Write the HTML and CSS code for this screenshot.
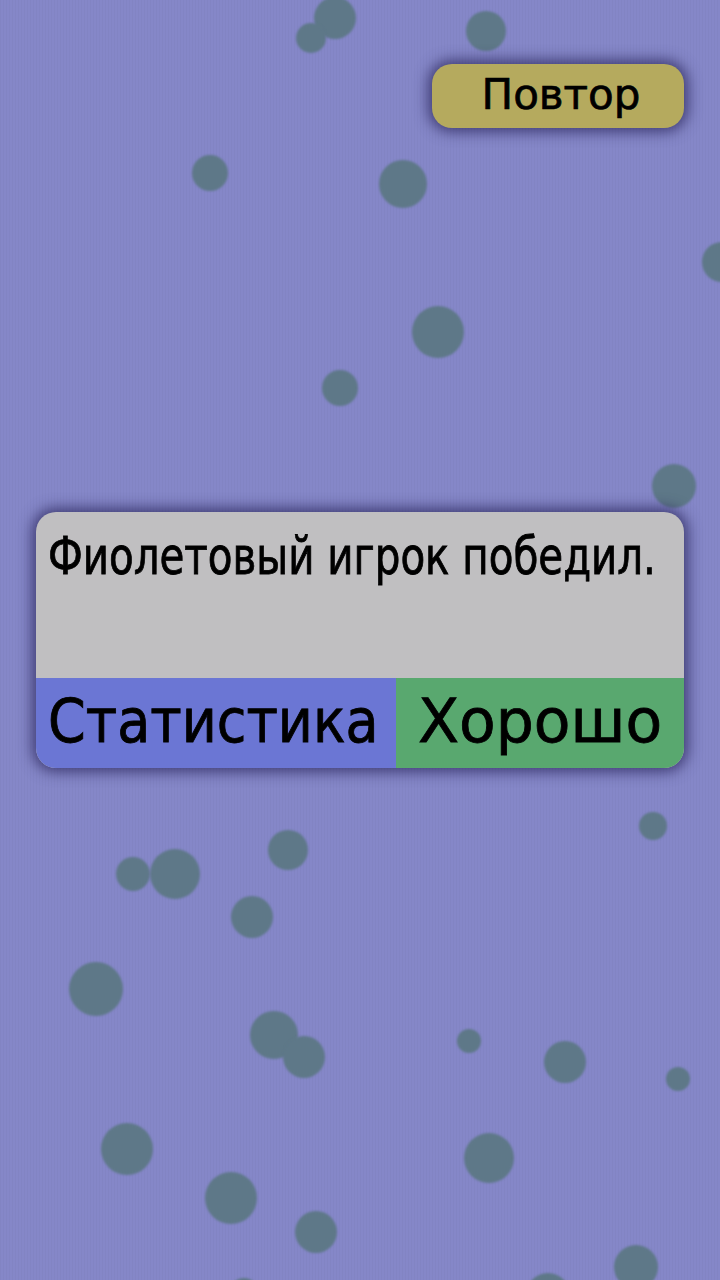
FILE: index.html
```html
<!DOCTYPE html>
<html lang="ru">
<head>
<meta charset="utf-8">
<title>Игра</title>
<link rel="stylesheet" href="styles.css">
</head>
<body>
<div class="screen">
  <div class="bubbles">
    <span class="dot" style="left:314px;top:-3px;width:42px;height:42px"></span>
    <span class="dot" style="left:296px;top:23px;width:30px;height:30px"></span>
    <span class="dot" style="left:466px;top:11px;width:40px;height:40px"></span>
    <span class="dot" style="left:192px;top:155px;width:36px;height:36px"></span>
    <span class="dot" style="left:379px;top:160px;width:48px;height:48px"></span>
    <span class="dot" style="left:702px;top:242px;width:40px;height:40px"></span>
    <span class="dot" style="left:412px;top:306px;width:52px;height:52px"></span>
    <span class="dot" style="left:322px;top:370px;width:36px;height:36px"></span>
    <span class="dot" style="left:652px;top:464px;width:44px;height:44px"></span>
    <span class="dot" style="left:639px;top:812px;width:28px;height:28px"></span>
    <span class="dot" style="left:268px;top:830px;width:40px;height:40px"></span>
    <span class="dot" style="left:116px;top:857px;width:34px;height:34px"></span>
    <span class="dot" style="left:150px;top:849px;width:50px;height:50px"></span>
    <span class="dot" style="left:231px;top:896px;width:42px;height:42px"></span>
    <span class="dot" style="left:69px;top:962px;width:54px;height:54px"></span>
    <span class="dot" style="left:250px;top:1011px;width:48px;height:48px"></span>
    <span class="dot" style="left:283px;top:1036px;width:42px;height:42px"></span>
    <span class="dot" style="left:457px;top:1029px;width:24px;height:24px"></span>
    <span class="dot" style="left:544px;top:1041px;width:42px;height:42px"></span>
    <span class="dot" style="left:666px;top:1067px;width:24px;height:24px"></span>
    <span class="dot" style="left:101px;top:1123px;width:52px;height:52px"></span>
    <span class="dot" style="left:464px;top:1133px;width:50px;height:50px"></span>
    <span class="dot" style="left:205px;top:1172px;width:52px;height:52px"></span>
    <span class="dot" style="left:295px;top:1211px;width:42px;height:42px"></span>
    <span class="dot" style="left:614px;top:1245px;width:44px;height:44px"></span>
    <span class="dot" style="left:230px;top:1278px;width:28px;height:28px"></span>
    <span class="dot" style="left:526px;top:1273px;width:44px;height:44px"></span>
  </div>

  <div class="topbar">
    <button class="replay">Повтор</button>
  </div>

  <div class="dialog">
    <div class="message"><span class="message-text">Фиолетовый игрок победил.</span></div>
    <div class="actions">
      <button class="action stats">Статистика</button>
      <button class="action ok">Хорошо</button>
    </div>
  </div>
</div>
</body>
</html>
```

FILE: styles.css
```css
html, body {
  margin: 0;
  padding: 0;
}

body {
  width: 720px;
  height: 1280px;
  overflow: hidden;
  background-color: #8587c8;
  background-image: repeating-linear-gradient(90deg, rgba(0,0,0,0.025) 0 1px, rgba(255,255,255,0) 1px 3px);
  font-family: "DejaVu Sans", "Noto Sans", sans-serif;
  color: #000;
}

.screen {
  position: relative;
  width: 720px;
  height: 1280px;
  overflow: hidden;
}

.bubbles {
  position: absolute;
  inset: 0;
}

.dot {
  position: absolute;
  border-radius: 50%;
  background: #5e7888;
  filter: blur(1.2px);
}

.topbar {
  position: relative;
  display: flex;
  justify-content: flex-end;
  padding: 64px 36px 0 0;
}

.replay {
  width: 252px;
  height: 64px;
  border: none;
  border-radius: 20px;
  background: #b5aa5e;
  box-shadow: 0 0 14px 4px rgba(40, 36, 90, 0.75);
  font-family: "DejaVu Sans", sans-serif;
  font-size: 42px;
  -webkit-text-stroke: 0.7px #000;
  color: #000;
  padding: 0 0 2px 6px;
  line-height: 1;
}

.dialog {
  position: relative;
  margin: 384px 0 0 36px;
  width: 648px;
  height: 256px;
  border-radius: 20px;
  overflow: hidden;
  background: #c0bfc1;
  box-shadow: 0 0 14px 4px rgba(40, 36, 90, 0.75);
  display: flex;
  flex-direction: column;
}

.message {
  flex: 1;
  padding: 14px 0 0 12px;
  overflow: hidden;
}

.message-text {
  display: inline-block;
  font-family: "DejaVu Sans Condensed", "DejaVu Sans", sans-serif;
  font-size: 51px;
  line-height: 1.2;
  white-space: nowrap;
  -webkit-text-stroke: 0.8px #000;
  transform: scaleX(0.88);
  transform-origin: left center;
}

.actions {
  height: 90px;
  display: flex;
}

.action {
  border: none;
  margin: 0;
  padding: 0;
  font-size: 60px;
  -webkit-text-stroke: 0.8px #000;
  color: #000;
  line-height: 1;
  white-space: nowrap;
}

.stats {
  width: 360px;
  background: #6b76d4;
  text-align: left;
  padding: 0 0 4px 12px;
  font-family: "DejaVu Sans Condensed", "DejaVu Sans", sans-serif;
}

.ok {
  flex: 1;
  background: #59a86f;
  padding: 0 0 4px 0;
  font-family: "DejaVu Sans", sans-serif;
}
```
